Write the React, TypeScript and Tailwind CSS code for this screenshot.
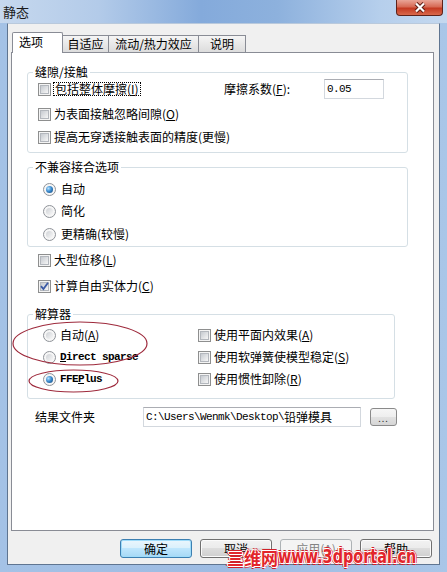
import React from 'react'

const cjk = "font-['Noto_Sans_CJK_SC','Noto_Sans_CJK_JP',sans-serif]"
const mono = "font-['Liberation_Mono',monospace] text-[11px] tracking-[-0.6px]"

function Check({ checked = false }: { checked?: boolean }) {
  return (
    <span className="relative flex w-[13px] h-[13px] shrink-0 border border-[#8e8f8f] bg-[#f4f4f4] p-[1px]">
      <span className="flex-1 border border-[#b3b7bd] bg-gradient-to-br from-[#c6cad0] to-[#f6f6f6]" />
      {checked && (
        <svg className="absolute left-[0px] top-[0px]" width="11" height="11" viewBox="0 0 11 11">
          <path d="M2 5.2L4.4 8L9 1.8" stroke="#3b5aa5" strokeWidth="1.8" fill="none" />
        </svg>
      )}
    </span>
  )
}

function Radio({ checked = false }: { checked?: boolean }) {
  return (
    <span className="flex w-[13px] h-[13px] shrink-0 rounded-full border border-[#8f9399] bg-[#f6f6f6] p-[2px]">
      {checked ? (
        <span className="flex-1 rounded-full bg-[radial-gradient(circle_at_35%_35%,#b5e2ff_0%,#3d8dd0_45%,#0c3d72_100%)]" />
      ) : (
        <span className="flex-1 rounded-full bg-gradient-to-br from-[#cfd2d6] to-[#f8f8f8]" />
      )}
    </span>
  )
}

function Btn({ children, kind = 'normal' }: { children: React.ReactNode; kind?: 'normal' | 'default' | 'disabled' }) {
  const look =
    kind === 'default'
      ? 'border-[#3c7fb1] bg-[linear-gradient(#eaf6fd_0%,#d9f0fc_50%,#bee6fd_50%,#a7d9f5_100%)] shadow-[inset_0_0_0_1px_#9fdcfa]'
      : kind === 'disabled'
        ? 'border-[#adb2b5] bg-[#f4f4f4] text-[#838383]'
        : 'border-[#707070] bg-[linear-gradient(#f2f2f2_0%,#ebebeb_50%,#dddddd_50%,#cfcfcf_100%)] shadow-[inset_0_0_0_1px_#fbfbfb]'
  return (
    <button className={`flex items-center justify-center w-[72px] h-[19px] rounded-[3px] border text-[12px] leading-[14px] ${look}`}>
      {children}
    </button>
  )
}

export default function App() {
  return (
    <div className={`relative w-[447px] h-[572px] overflow-hidden flex flex-col bg-gradient-to-r from-[#a4c2e6] via-[#9dbbe2] to-[#a9c6e8] text-black ${cjk}`}>
      {/* title bar */}
      <div className="flex h-[23px] justify-between bg-[linear-gradient(90deg,#c6d8ee_0%,#b3cbe9_22%,#84aadb_45%,#8db1dd_62%,#b6cfec_85%,#c4d8ef_100%)]">
        <span className="pl-[3px] pt-[3px] text-[13px] leading-[17px] text-[#1a1a1a]">静态</span>
        <button className="mr-[4px] flex items-center justify-center w-[47px] h-[16px] rounded-b-[4px] border border-t-0 border-[#5e2219] bg-[linear-gradient(#e9a597_0%,#d76a55_45%,#c43a22_55%,#d9694c_100%)]">
          <svg width="14" height="11" viewBox="0 0 14 11">
            <path d="M3 1.5L11 9.5M11 1.5L3 9.5" stroke="#5a1c14" strokeWidth="4" />
            <path d="M3 1.5L11 9.5M11 1.5L3 9.5" stroke="#ffffff" strokeWidth="2.2" />
          </svg>
        </button>
      </div>

      {/* client */}
      <div className="mx-[7px] mb-[7px] flex flex-1 flex-col border border-[#5f7591] border-t-[#b9c9dc] bg-[#f0f0f0] pl-[3px] pt-[8px] text-[12px] leading-[16px]">
        {/* tabs */}
        <div className="flex h-[20px] items-end">
          <div className="relative z-10 -mb-[1px] ml-[1px] h-[21px] w-[51px] rounded-t-[2px] border border-b-0 border-[#898c95] bg-white pl-[6px] pt-[1px]">选项</div>
          <div className="-ml-[1px] flex h-[17px] w-[47px] items-center justify-center border border-b-0 border-[#898c95] bg-gradient-to-b from-[#f5f5f5] to-[#dcdcdc]">自适应</div>
          <div className="-ml-[1px] flex h-[17px] w-[91px] items-center justify-center border border-b-0 border-[#898c95] bg-gradient-to-b from-[#f5f5f5] to-[#dcdcdc]">流动/热力效应</div>
          <div className="-ml-[1px] flex h-[17px] w-[48px] items-center justify-center border border-b-0 border-[#898c95] bg-gradient-to-b from-[#f5f5f5] to-[#dcdcdc]">说明</div>
        </div>

        {/* panel */}
        <div className="flex h-[479px] w-[423px] flex-col border border-[#898c95] bg-white">
          <fieldset className="ml-[15px] mt-[11px] w-[381px] rounded-[3px] border border-[#d5dfe5] pb-[4px]">
            <legend className="ml-[5px] px-[2px]">缝隙/接触</legend>
            <div className="flex h-[18px] items-center pl-[10px]">
              <div className="flex w-[186px] items-center">
                <Check />
                <span className="ml-[2px] border border-dotted border-black px-[1px] leading-[12px]">包括整体摩擦(<u>I</u>)</span>
              </div>
              <span className="w-[100px]">摩擦系数(<u>F</u>):</span>
              <div className="flex h-[20px] w-[60px] items-center border border-[#d3d8de] border-t-[#abadb3] pl-[2px]">
                <span className={mono}>0.05</span>
              </div>
            </div>
            <div className="mt-[5px] flex h-[22px] items-center pl-[10px]">
              <Check />
              <span className="ml-[3px]">为表面接触忽略间隙(<u>O</u>)</span>
            </div>
            <div className="mt-[1px] flex h-[22px] items-center pl-[10px]">
              <Check />
              <span className="ml-[3px]">提高无穿透接触表面的精度(更慢)</span>
            </div>
          </fieldset>

          <fieldset className="ml-[15px] mt-[6px] w-[381px] rounded-[3px] border border-[#d5dfe5] pb-[1px]">
            <legend className="ml-[5px] px-[2px]">不兼容接合选项</legend>
            <div className="mt-[3px] flex h-[22px] items-center pl-[15px]">
              <Radio checked />
              <span className="ml-[5px]">自动</span>
            </div>
            <div className="flex h-[22px] items-center pl-[15px]">
              <Radio />
              <span className="ml-[5px]">简化</span>
            </div>
            <div className="mt-[1px] flex h-[22px] items-center pl-[15px]">
              <Radio />
              <span className="ml-[5px]">更精确(较慢)</span>
            </div>
          </fieldset>

          <div className="mt-[2px] flex h-[22px] items-center pl-[26px]">
            <Check />
            <span className="ml-[3px]">大型位移(<u>L</u>)</span>
          </div>
          <div className="mt-[4px] flex h-[22px] items-center pl-[26px]">
            <Check checked />
            <span className="ml-[3px]">计算自由实体力(<u>C</u>)</span>
          </div>

          <fieldset className="ml-[15px] mt-[9px] w-[368px] rounded-[3px] border border-[#d5dfe5] pb-[8px]">
            <legend className="ml-[5px] px-[2px]">解算器</legend>
            <div className="mt-[2px] flex h-[22px] items-center">
              <div className="flex w-[170px] items-center pl-[15px]">
                <Radio />
                <span className="ml-[4px]">自动(<u>A</u>)</span>
              </div>
              <Check />
              <span className="ml-[3px]">使用平面内效果(<u>A</u>)</span>
            </div>
            <div className="flex h-[22px] items-center">
              <div className="flex w-[170px] items-center pl-[15px]">
                <Radio />
                <span className={`ml-[4px] font-bold ${mono}`}><u>D</u>irect sparse</span>
              </div>
              <Check />
              <span className="ml-[3px]">使用软弹簧使模型稳定(<u>S</u>)</span>
            </div>
            <div className="flex h-[22px] items-center">
              <div className="flex w-[170px] items-center pl-[15px]">
                <Radio checked />
                <span className={`ml-[4px] font-bold ${mono}`}>FFE<u>P</u>lus</span>
              </div>
              <Check />
              <span className="ml-[3px]">使用惯性卸除(<u>R</u>)</span>
            </div>
          </fieldset>

          <div className="mt-[8px] flex h-[20px] items-center pl-[23px]">
            <span className="w-[108px]">结果文件夹</span>
            <div className="flex h-[20px] w-[218px] items-center border border-[#d3d8de] border-t-[#abadb3] pl-[2px]">
              <span className={mono}>{'C:\\Users\\Wenmk\\Desktop\\'}</span>
              <span>铅弹模具</span>
            </div>
            <button className="ml-[9px] flex h-[18px] w-[27px] items-center justify-center rounded-[3px] border border-[#8a8a8a] bg-[linear-gradient(#f6f6f6_0%,#eeeeee_50%,#e2e2e2_50%,#d6d6d6_100%)] pt-[3px] text-[9px] leading-[10px] tracking-[1px] text-[#333]">
              ...
            </button>
          </div>
        </div>

        {/* buttons */}
        <div className="ml-[109px] mt-[8px] flex gap-[8px]">
          <Btn kind="default">确定</Btn>
          <Btn>取消</Btn>
          <Btn kind="disabled">应用(<u>A</u>)</Btn>
          <Btn>帮助</Btn>
        </div>
      </div>

      {/* red annotation ellipses */}
      <svg className="pointer-events-none absolute left-0 top-0" width="447" height="572">
        <ellipse cx="80" cy="343.5" rx="67" ry="21.5" fill="none" stroke="#9e2a3c" strokeWidth="1.2" />
        <ellipse cx="73.5" cy="381" rx="44.5" ry="11" fill="none" stroke="#9e2a3c" strokeWidth="1.2" />
      </svg>

      {/* watermark */}
      <div className="pointer-events-none absolute left-[227px] top-[547px] flex w-[240px] items-end whitespace-nowrap font-bold text-[#e2252b] leading-none [text-shadow:1px_0_0_#fff,-1px_0_0_#fff,0_1px_0_#fff,0_-1px_0_#fff,1px_1px_0_#fff,-1px_-1px_0_#fff,2px_0_0_#d0202a,-2px_0_0_#d0202a,0_2px_0_#d0202a,0_-2px_0_#d0202a]">
        <span className="shrink-0 text-[17px]">三维网</span>
        <span className="inline-block shrink-0 origin-left scale-x-[0.76] font-['DejaVu_Sans',sans-serif] text-[19px]">www.3dportal.cn</span>
      </div>
    </div>
  )
}
